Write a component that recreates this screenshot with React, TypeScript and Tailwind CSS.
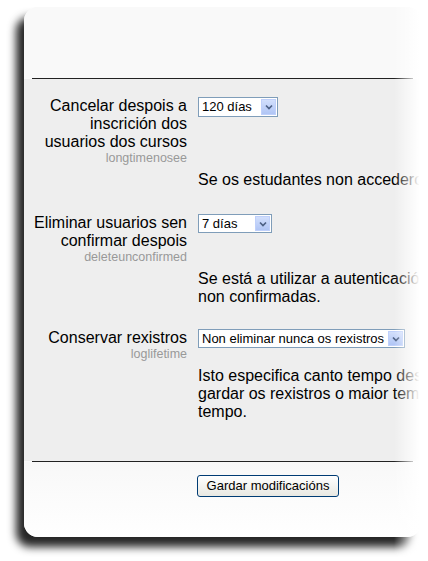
import React from "react";

const font = { fontFamily: '"Liberation Sans", Arial, sans-serif' };

function Select({ w, h, value }: { w: string; h: string; value: string }) {
  return (
    <div className={`${w} ${h} flex items-stretch border border-[#7f9db9] bg-white`}>
      <div className="flex-1 pl-[3px] text-[13px] leading-[17px] text-black whitespace-nowrap overflow-hidden">{value}</div>
      <div className="m-[1px] w-[15px] flex items-center justify-center bg-gradient-to-b from-[#d2dffc] to-[#b0c5f5] border border-[#bfd0fb]">
        <svg width="8" height="6" viewBox="0 0 8 6">
          <path d="M1 1.5 L4 4.5 L7 1.5" stroke="#4d6185" strokeWidth="1.7" fill="none" />
        </svg>
      </div>
    </div>
  );
}

function Row({
  label,
  sub,
  control,
  desc,
  className = "",
}: {
  label: React.ReactNode;
  sub: string;
  control: React.ReactNode;
  desc: React.ReactNode;
  className?: string;
}) {
  return (
    <div className={`grid grid-cols-[163px_1fr] gap-x-[11px] ${className}`}>
      <div className="text-right">
        <div className="text-[16px] leading-[18px] text-black">{label}</div>
        <div className="text-[12.5px] leading-[14px] text-[#999]">{sub}</div>
      </div>
      <div>{control}</div>
      <div />
      <div className="mt-[6px] text-[16px] leading-[18px] text-black whitespace-nowrap">{desc}</div>
    </div>
  );
}

export default function App() {
  return (
    <div className="relative w-[428px] h-[561px] bg-white overflow-hidden" style={font}>
      <div className="pt-[7px] pl-[24px]">
        <div className="w-[397px] h-[530px] rounded-[14px] overflow-hidden flex flex-col bg-[#fafafa] shadow-[-8px_10px_8px_rgba(0,0,0,0.85)]">
          <div className="h-[71px] bg-[#f9f9f9]" />
          <div className="mx-[8px] h-[1px] bg-[#222]" />
          <div className="h-[382px] bg-[#eeeeee] pt-[18px] overflow-hidden">
            <Row
              label={<>Cancelar despois a<br />inscrición dos<br />usuarios dos cursos</>}
              sub="longtimenosee"
              control={<Select w="w-[80px]" h="h-[20px]" value="120 días" />}
              desc={<>Se os estudantes non accederon</>}
            />
            <Row
              className="mt-[25px]"
              label={<>Eliminar usuarios sen<br />confirmar despois</>}
              sub="deleteunconfirmed"
              control={<Select w="w-[74px]" h="h-[19px]" value="7 días" />}
              desc={<>Se está a utilizar a autenticación<br />non confirmadas.</>}
            />
            <Row
              className="mt-[23px]"
              label={<>Conservar rexistros</>}
              sub="loglifetime"
              control={<Select w="w-[207px]" h="h-[19px]" value="Non eliminar nunca os rexistros" />}
              desc={<>Isto especifica canto tempo desexa<br />gardar os rexistros o maior tempo<br />tempo.</>}
            />
          </div>
          <div className="mx-[8px] h-[1px] bg-[#222]" />
          <div className="flex-1 bg-gradient-to-b from-[#f8f8f8] to-white pt-[11px] pl-[173px]">
            <button className="w-[142px] h-[22px] rounded-[3px] border border-[#003c74] bg-gradient-to-b from-white to-[#e8e8e2] text-[13px] leading-[18px] text-black" style={font}>
              Gardar modificacións
            </button>
          </div>
        </div>
      </div>
      <div className="absolute top-0 bottom-0 left-[394px] right-0 bg-gradient-to-r from-[rgba(255,255,255,0)] via-white via-75% to-white" />
    </div>
  );
}
